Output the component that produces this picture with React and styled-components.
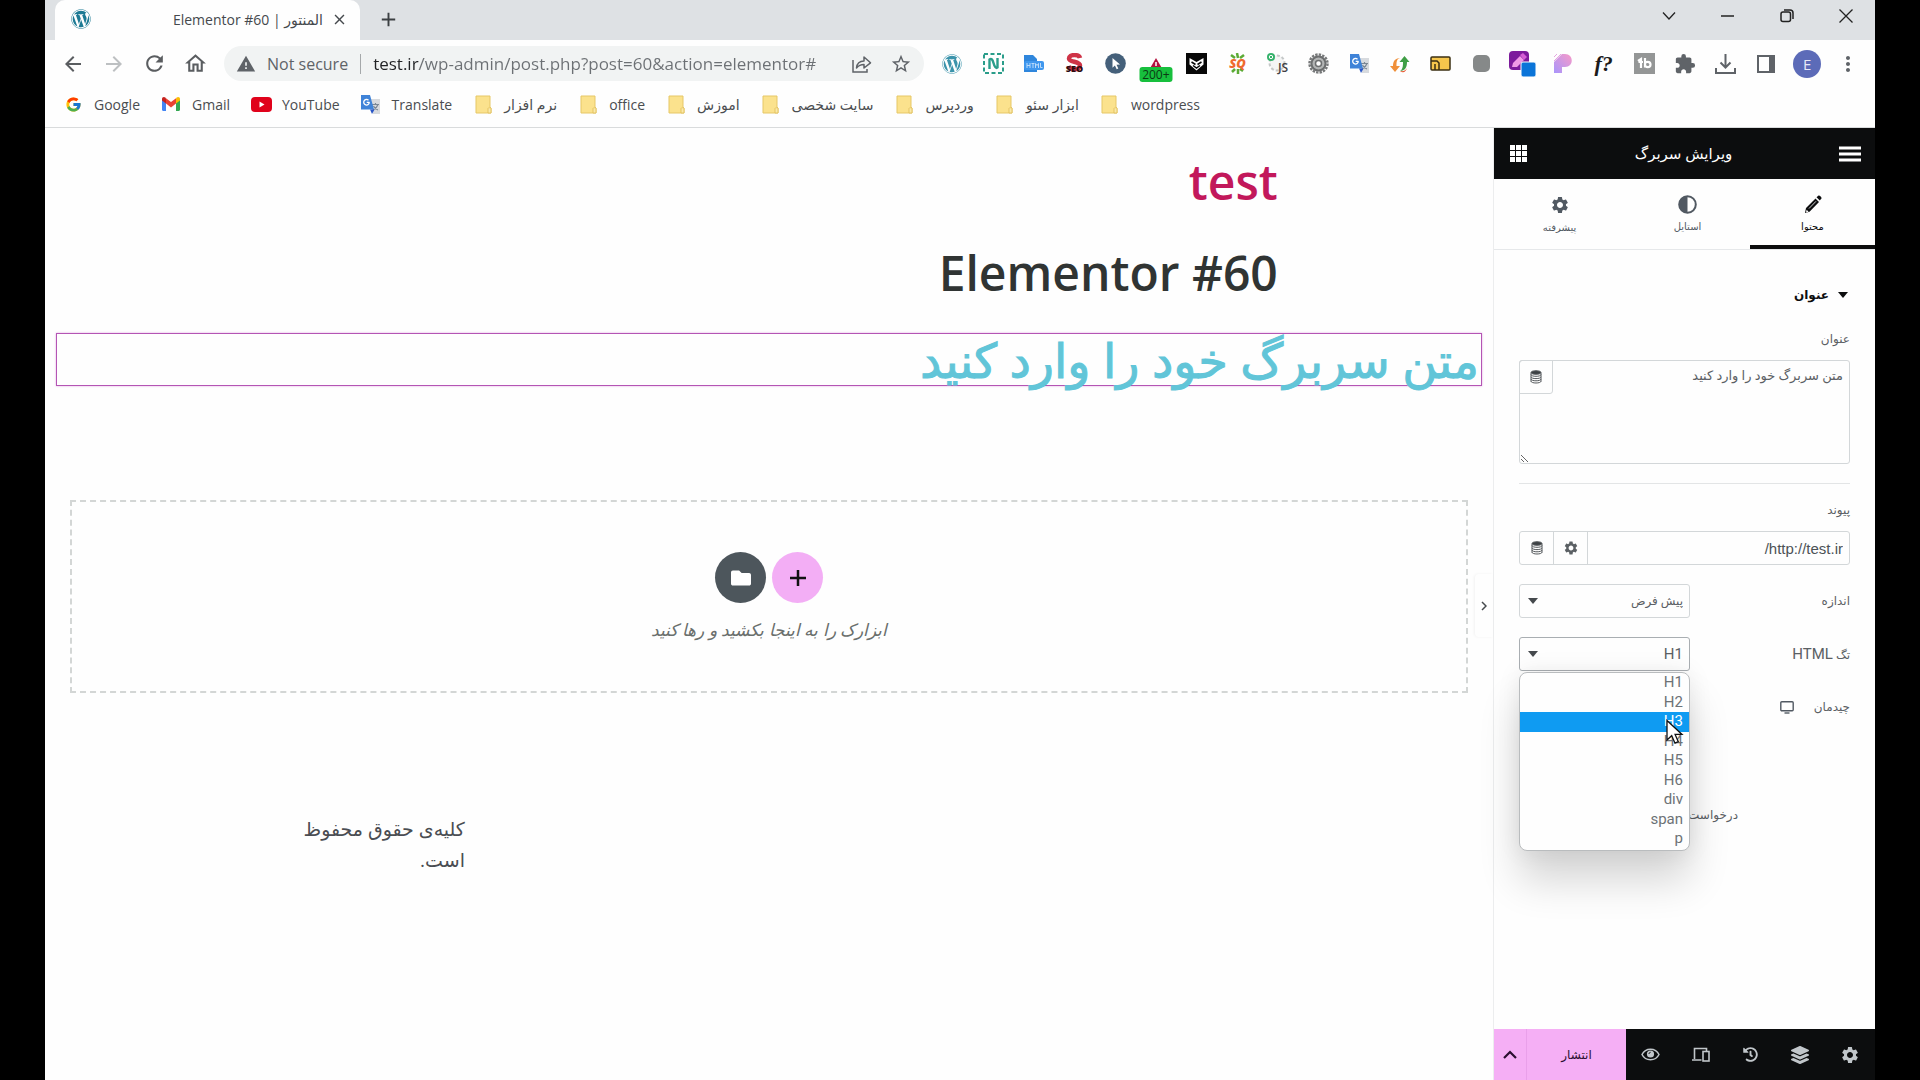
import React from 'react'
import styled, { createGlobalStyle, css } from 'styled-components';
import { FaWordpress, FaHistory, FaLayerGroup, FaFolder } from "react-icons/fa";
import { MdArrowBack, MdArrowForward, MdRefresh, MdOutlineHome, MdWarning, MdStarBorder, MdClose, MdAdd, MdMoreVert, MdSettings, MdExtension } from "react-icons/md";
import { FcGoogle } from "react-icons/fc";

const GlobalStyle = createGlobalStyle`
  * {
    box-sizing: border-box;
  }
  body {
    margin: 0;
    background: #000;
    font-family: 'Open Sans', 'DejaVu Sans', sans-serif;
  }
  button, input, select, textarea {
    font-family: inherit;
    margin: 0;
  }
  button {
    border: 0;
    padding: 0;
    background: none;
    color: inherit;
  }
  h1, h2, p, ul {
    margin: 0;
    padding: 0;
  }
  a {
    color: inherit;
    text-decoration: none;
  }
  svg {
    display: block;
    flex: none;
  }
`;

const Screen = styled.div`
  display: flex;
  flex-direction: column;
  min-height: 100vh;
  margin: 0 45px;
  background: #fefefe;
`;

/* ---------- browser ---------- */

const TabStrip = styled.div`
  display: flex;
  align-items: flex-start;
  height: 40px;
  padding-left: 10px;
  background: #dee1e4;
`;

const Tab = styled.div`
  display: flex;
  align-items: center;
  width: 305px;
  height: 40px;
  padding: 0 12px 2px 16px;
  border-radius: 10px 10px 0 0;
  background: #fefefe;
  color: #45494d;
  font-size: 14px;
  span {
    flex: 1;
    margin-right: 8px;
    text-align: right;
    white-space: nowrap;
  }
`;

const NewTab = styled.button`
  display: flex;
  align-items: center;
  justify-content: center;
  width: 56px;
  height: 38px;
  color: #3c4043;
`;

const WindowControls = styled.div`
  display: flex;
  margin-left: auto;
`;

const WindowButton = styled.button`
  display: flex;
  align-items: center;
  justify-content: center;
  width: 59px;
  height: 32px;
`;

const Toolbar = styled.div`
  display: flex;
  align-items: center;
  height: 47px;
  padding: 0 7px;
`;

const NavButton = styled.button`
  display: flex;
  align-items: center;
  justify-content: center;
  width: 41px;
  height: 35px;
  color: ${({ $dim }) => ($dim ? '#bdc0c2' : '#5a5d60')};
`;

const Address = styled.label`
  display: flex;
  align-items: center;
  width: 700px;
  height: 35px;
  margin: 0 8px;
  padding: 0 12px;
  border-radius: 18px;
  background: #f1f3f3;
  color: #5f6368;
  font-size: 16px;
  .secure {
    margin-left: 11px;
    padding-right: 12px;
    border-right: 1px solid #a5a8aa;
    line-height: 20px;
    white-space: nowrap;
  }
  input {
    flex: 1;
    min-width: 0;
    padding: 0;
    margin-left: 12px;
    border: 0;
    outline: 0;
    font-size: 17px;
    background: linear-gradient(90deg, #202124 46px, #6c7074 46px);
    background-clip: text;
    -webkit-text-fill-color: transparent;
  }
  button + button {
    margin-left: 18px;
  }
`;

const Extensions = styled.div`
  display: flex;
  flex: 1;
  min-width: 0;
`;

const Extension = styled.button`
  position: relative;
  display: flex;
  align-items: center;
  justify-content: center;
  flex: 1;
  min-width: 0;
  height: 35px;
  color: #5f6368;
`;

const Count = styled.span`
  position: absolute;
  left: 50%;
  bottom: -1px;
  transform: translateX(-50%);
  width: 33px;
  border-radius: 3px;
  background: #17bf3d;
  color: #0b3a14;
  font: 12px/15px 'Open Sans', sans-serif;
`;

const Avatar = styled.span`
  width: 28px;
  height: 28px;
  border-radius: 50%;
  background: #5c6bb8;
  color: #e8eaf6;
  font-size: 15px;
  line-height: 28px;
`;

const FontMark = styled.span`
  color: #1b1b1b;
  font: italic 700 22px/28px 'Liberation Serif', serif;
`;

const Bookmarks = styled.nav`
  display: flex;
  align-items: center;
  gap: 21px;
  height: 41px;
  padding: 0 18px 6px;
  border-bottom: 1px solid #d9dbdc;
`;

const Bookmark = styled.a`
  display: flex;
  align-items: center;
  gap: 11px;
  color: #4a4d50;
  font-size: 14px;
  white-space: nowrap;
  .icon {
    display: flex;
    justify-content: center;
    width: 20px;
  }
`;

/* ---------- page canvas ---------- */

const Editor = styled.div`
  display: flex;
  flex: 1;
`;

const Canvas = styled.main`
  position: relative;
  flex: 1;
  min-width: 0;
  direction: rtl;
`;

const Content = styled.div`
  width: calc(70% + 4px);
  margin: 0 auto;
`;

const SiteTitle = styled.h1`
  padding-top: 19px;
  color: #c2185b;
  font-size: 48px;
  font-weight: 600;
  line-height: 70px;
`;

const PageTitle = styled.h2`
  margin: 21px 0 25px;
  color: #303433;
  font-size: 48px;
  font-weight: 600;
  line-height: 70px;
`;

const HeadingWidget = styled.h2`
  height: 53px;
  margin: 0 11px;
  padding-right: 2px;
  border: 1px solid #b455b4;
  box-shadow: 0 0 2px #e3a9e3;
  color: #61c5d8;
  font-size: 48px;
  font-weight: 500;
  line-height: 52px;
  white-space: nowrap;
  -webkit-text-stroke: 1px #61c5d8;
`;

const DropArea = styled.section`
  display: flex;
  flex-direction: column;
  align-items: center;
  height: 193px;
  margin: 114px 25px 0;
  padding-top: 50px;
  border: 2px dashed #d3d6d5;
  color: #6a6f6d;
  font-size: 17px;
  font-style: italic;
  p {
    margin-top: 15px;
    line-height: 24px;
  }
`;

const CircleButtons = styled.div`
  display: flex;
  gap: 6px;
`;

const CircleButton = styled.button`
  display: flex;
  align-items: center;
  justify-content: center;
  width: 51px;
  height: 51px;
  border-radius: 50%;
  background: ${({ $bg }) => $bg};
`;

const Copyright = styled.footer`
  width: 70%;
  margin: 121px auto 0;
  direction: ltr;
  p {
    width: 20%;
    direction: rtl;
    color: #4a4d52;
    font-size: 19px;
    line-height: 31px;
  }
`;

const CollapseButton = styled.button`
  position: absolute;
  top: 446px;
  right: 0;
  display: flex;
  align-items: center;
  justify-content: center;
  width: 18px;
  height: 63px;
  border-radius: 4px 0 0 4px;
  background: #fefefe;
  box-shadow: -1px 0 3px #0000000d;
`;

/* ---------- side panel ---------- */

const Panel = styled.aside`
  display: flex;
  flex-direction: column;
  width: 382px;
  border-left: 1px solid #ecedee;
  direction: rtl;
  font-family: Roboto, 'DejaVu Sans', sans-serif;
  color: #5b6064;
  font-size: 12px;
`;

const PanelHeader = styled.header`
  display: flex;
  align-items: center;
  justify-content: space-between;
  height: 51px;
  padding: 0 14px 0 16px;
  background: #0c0d0e;
  color: #fff;
  font-size: 15px;
`;

const PanelTabs = styled.div`
  display: grid;
  grid-template-columns: 125px 125px 1fr;
  height: 71px;
  border-bottom: 1px solid #e6e8ea;
`;

const PanelTab = styled.button`
  display: flex;
  flex-direction: column;
  align-items: center;
  gap: 5px;
  padding-top: 16px;
  color: #515962;
  font-size: 10px;
  line-height: 16px;
  ${({ $active }) => $active && css`
    border-bottom: 4px solid #0c0d0e;
    color: #0c0d0e;
  `}
`;

const Controls = styled.div`
  flex: 1;
  padding: 33px 25px 0;
`;

const SectionTitle = styled.button`
  display: flex;
  align-items: center;
  gap: 9px;
  height: 24px;
  margin-bottom: 22px;
  padding: 0 2px;
  color: #0c0d0e;
  font-size: 12px;
  font-weight: 700;
`;

const Label = styled.label`
  display: block;
  line-height: 20px;
`;

const Area = styled.div`
  position: relative;
  margin-top: 11px;
  textarea {
    display: block;
    width: 100%;
    height: 104px;
    padding: 5px 6px;
    border: 1px solid #d3d7d9;
    border-radius: 3px;
    outline: 0;
    background: transparent;
    color: #5b6064;
    font-size: 13px;
    line-height: 20px;
    resize: vertical;
  }
`;

const DynamicTag = styled.button`
  position: absolute;
  top: 0;
  left: 0;
  display: flex;
  align-items: center;
  justify-content: center;
  width: 34px;
  height: 34px;
  border: 1px solid #d3d7d9;
  border-radius: 3px 0 3px 0;
`;

const Divider = styled.hr`
  margin: 19px 0 16px;
  border: 0;
  border-top: 1px solid #e3e5e6;
`;

const UrlField = styled.div`
  display: flex;
  height: 34px;
  margin: 11px 0 19px;
  border: 1px solid #d3d7d9;
  border-radius: 3px;
  input {
    flex: 1;
    min-width: 0;
    padding: 0 6px;
    border: 0;
    outline: 0;
    background: none;
    color: #4c5256;
    font-family: 'Liberation Sans', sans-serif;
    font-size: 15px;
  }
  button {
    display: flex;
    align-items: center;
    justify-content: center;
    width: 34px;
    border-right: 1px solid #d3d7d9;
  }
`;

const Row = styled.div`
  display: flex;
  align-items: center;
  justify-content: space-between;
  height: 34px;
  margin-bottom: 19px;
`;

const Field = styled.div`
  position: relative;
  width: 171px;
  svg {
    position: absolute;
    top: 14px;
    left: 9px;
    pointer-events: none;
  }
`;

const Select = styled.select`
  display: block;
  width: 100%;
  height: 34px;
  padding: 0 6px;
  appearance: none;
  border: 1px solid ${({ $open }) => ($open ? '#a9aeb2' : '#d3d7d9')};
  border-radius: 3px;
  outline: 0;
  background: transparent;
  color: #5b6064;
  font-size: ${({ $size }) => $size || 12}px;
`;

const Latin = styled.span`
  font-size: 15px;
`;

const Options = styled.ul`
  position: absolute;
  z-index: 2;
  top: 35px;
  left: 0;
  right: 0;
  overflow: hidden;
  padding-bottom: 1px;
  border: 1px solid #b9bcbe;
  border-radius: 8px;
  background: #fefefe;
  box-shadow: 0 30px 40px #00000029, 0 0 24px #00000014;
  list-style: none;
`;

const Option = styled.li`
  height: ${({ $tall }) => ($tall ? 20 : 19)}px;
  padding-right: 6px;
  color: ${({ $hover }) => ($hover ? '#fff' : '#6d7276')};
  background: ${({ $hover }) => ($hover ? '#0f9bf2' : 'transparent')};
  font-size: 15px;
  line-height: 19px;
`;

const Cursor = styled.svg`
  && {
    position: absolute;
    z-index: 3;
    top: 82px;
    left: 147px;
  }
`;

const Responsive = styled.span`
  display: flex;
  align-items: center;
  gap: 20px;
`;

const Help = styled.a`
  display: block;
  margin-top: 81px;
  padding-right: 112px;
  line-height: 20px;
`;

const PanelFooter = styled.footer`
  display: flex;
  height: 51px;
  background: #0c0d0e;
  color: #c1c6ca;
  button {
    display: flex;
    align-items: center;
    justify-content: center;
    flex: 1;
  }
  .publish {
    flex: none;
    width: 99px;
    background: #f5aff5;
    color: #2b0f30;
    font-size: 12px;
  }
  .more {
    flex: none;
    width: 33px;
    border-right: 1px solid #e9a0ea;
    background: #f5aff5;
    color: #0c0d0e;
  }
`;

/* ---------- drawings ---------- */

const DatabaseIcon = () => (
  <svg width="12" height="14" viewBox="0 0 12 14" fill="none" stroke="#55595c">
    <ellipse cx="6" cy="2.5" rx="5" ry="1.8" fill="#3c4043" />
    <path d="M1 4.5c0 2.4 10 2.4 10 0M1 6.8c0 2.4 10 2.4 10 0M1 9c0 2.4 10 2.4 10 0M1 11.2c0 2.4 10 2.4 10 0M1 3v8.500M11 3v8.500" />
  </svg>
);

const CaretIcon = ({ color = '#45494d' }) => (
  <svg width="10" height="6" viewBox="0 0 10 6"><path d="M0 0h10L5 6z" fill={color} /></svg>
);

const TranslateIcon = () => (
  <svg width="21" height="21" viewBox="0 0 21 21">
    <path d="M9 5h11v15h-7z" fill="#d7dade" />
    <path d="M12 10.500h7M15.500 9v1.500M18 10.500c-1 3-3 4.500-5 5.500M13.500 12c1 2 3 3.500 4.500 4" stroke="#7b8794" strokeWidth="1.200" fill="none" />
    <path d="M1 1h9l4 14.500H1z" fill="#3f83d8" />
    <path d="M10 15.500h4.500L12 20z" fill="#2a56c6" />
    <path d="M9.500 8.300H6.700M9.300 8.300a2.800 2.800 0 1 1-.8-2" stroke="#fff" strokeWidth="1.300" fill="none" />
  </svg>
);

const GmailIcon = () => (
  <svg width="18" height="14" viewBox="0 0 18 14">
    <path d="M0 2v10.800c0 .7.5 1.200 1.200 1.200H4V6z" fill="#4285f4" />
    <path d="M18 2v10.800c0 .7-.5 1.200-1.200 1.200H14V6z" fill="#34a853" />
    <path d="M4 1.200l5 3.900 5-3.900V6.500l-5 3.900-5-3.900z" fill="#ea4335" />
    <path d="M0 2C0 .2 2-.5 3.300.6L4 1.200v5.300L0 3.500z" fill="#c5221f" />
    <path d="M18 2c0-1.800-2-2.500-3.300-1.400L14 1.200v5.300l4-3z" fill="#fbbc04" />
  </svg>
);

const YoutubeIcon = () => (
  <svg width="21" height="15" viewBox="0 0 21 15">
    <rect width="21" height="15" rx="4" fill="#e0021b" />
    <path d="M8.500 4.500l5 3-5 3z" fill="#fff" />
  </svg>
);

const FolderIcon = () => (
  <svg width="17" height="19" viewBox="0 0 17 19">
    <path d="M1 1h14v11l1 1v5H1z" fill="#fbe28d" stroke="#e6c766" />
    <path d="M13 17v-3.500c0-1 3-1 3 0V18h-3z" fill="#fbe9a8" stroke="#e0bd55" strokeWidth=".8" />
  </svg>
);

const ShareIcon = () => (
  <svg width="20" height="18" viewBox="0 0 20 18" fill="none" stroke="#5f6368" strokeWidth="1.500">
    <path d="M1 5v12h14v-3" />
    <path d="M4.500 13c.5-4.500 3.500-7 7.500-7V2l6.500 5.800L12 13V9.500c-3 0-5.500 1-7.500 3.500z" strokeLinejoin="round" />
  </svg>
);

const RestoreIcon = () => (
  <svg width="14" height="14" viewBox="0 0 14 14" fill="none" stroke="#222" strokeWidth="1.500">
    <rect x="1" y="3" width="9.500" height="9.500" rx="2" />
    <path d="M4 1h6a3 3 0 0 1 3 3v6" />
  </svg>
);

const HtmlIcon = () => (
  <svg width="21" height="19" viewBox="0 0 21 19">
    <path d="M1 1h9l4 4v13H1z" fill="#2f86dc" />
    <rect x="1" y="7" width="20" height="9" rx="2" fill="#3f97ee" />
    <path d="M4 9v5M7 9v5M4 11.500h3M8.500 9.500h3M10 9.500V14M12.500 14V9.500l1.500 2 1.500-2V14M17.500 9v4.500h2" stroke="#b9dafb" fill="none" />
  </svg>
);

const WarningCount = () => (
  <svg width="14" height="12" viewBox="0 0 14 12">
    <path d="M7 0l7 12H0z" fill="#b3123f" />
    <path d="M7 4v4M7 9v1.500" stroke="#fff" strokeWidth="1.500" />
  </svg>
);

const NimbusIcon = () => (
  <svg width="21" height="21" viewBox="0 0 21 21" fill="none" stroke="#2a9d8a">
    <rect x="1" y="1" width="19" height="19" strokeWidth="2" strokeDasharray="4 2.500" />
    <path d="M6.500 16V6.500c2-1.500 3 0 4 3.500s2.500 6 4 4.500V5" strokeWidth="2.400" />
  </svg>
);

const SeoIcon = () => (
  <svg width="21" height="21" viewBox="0 0 21 21">
    <path d="M16 5c-1-4-11-4-11 .5 0 4 11 2.500 11 7 0 5-10 5-11.500.5" fill="none" stroke="#cf3347" strokeWidth="4.500" />
    <text x="10.500" y="19" textAnchor="middle" fontSize="9" fontWeight="800" fill="#2b0b10">SEO</text>
  </svg>
);

const CursorIcon = () => (
  <svg width="21" height="21" viewBox="0 0 21 21">
    <circle cx="10.500" cy="10.500" r="10.300" fill="#45607a" />
    <path d="M7.500 5l7.500 6.500-3.500.3 1.800 3.700-1.600.8-1.800-3.800-2.400 2.200z" fill="#fff" />
  </svg>
);

const OwlIcon = () => (
  <svg width="21" height="21" viewBox="0 0 21 21">
    <path d="M0 0h21v21H0z" fill="#070707" />
    <path d="M3.500 5l7 4 7-4v6.500l-7 6-7-6z" fill="#fff" />
    <path d="M5.500 9l4 2.500M15.500 9l-4 2.500M7 12.500l3.500 2.500 3.500-2.500" stroke="#070707" strokeWidth="1.500" fill="none" />
  </svg>
);

const SqIcon = () => (
  <svg width="21" height="21" viewBox="0 0 21 21">
    <path d="M4 2l4 3M10 0l1 5M17 2l-4 3M5 19l3-3M11 21v-5M16 18l-3-2" stroke="#5cab35" strokeWidth="2.500" />
    <text x="10.500" y="15" textAnchor="middle" fontSize="13" fontWeight="800" fontStyle="italic" fill="#ef6a2e">SQ</text>
  </svg>
);

const JsIcon = () => (
  <svg width="22" height="22" viewBox="0 0 22 22">
    <circle cx="10" cy="10" r="7.500" fill="#f4f5f5" stroke="#c5c8c8" strokeWidth="2" strokeDasharray="3 2" />
    <circle cx="4" cy="4" r="4" fill="#35b26b" />
    <circle cx="4" cy="4" r="1.700" fill="none" stroke="#fff" />
    <text x="16" y="19" textAnchor="middle" fontSize="12" fontWeight="600" fill="#3f4143">JS</text>
  </svg>
);

const GearIcon = () => (
  <svg width="21" height="21" viewBox="0 0 21 21" fill="none">
    <circle cx="10.500" cy="10.500" r="9" stroke="#77797a" strokeWidth="2.500" strokeDasharray="2.400 1.130" />
    <circle cx="10.500" cy="10.500" r="7" fill="#b3b5b5" stroke="#6c6e6f" strokeWidth="2" />
    <circle cx="10.500" cy="10.500" r="3" fill="#fefefe" stroke="#6c6e6f" strokeWidth="1.500" />
  </svg>
);

const ArrowsIcon = () => (
  <svg width="20" height="20" viewBox="0 0 20 20">
    <path d="M10 17c2.500-1.500 3-4 3-9h-3.500L14.500 2l5 6H17c0 6-2 8.500-7 9z" fill="#3f9e45" />
    <path d="M10 17c4 .5 6-.5 7-3-1 4-4 5.500-7 3z" fill="#e8572f" />
    <path d="M10 4C6.500 5 6.500 8 6.500 12H10l-5 6-5-6h3c0-5 2-7.500 7-8z" fill="#f0903a" />
  </svg>
);

const YellowFolder = () => (
  <svg width="21" height="15" viewBox="0 0 21 15">
    <rect x="1" y="1" width="19" height="13" rx="1" fill="#f6c64c" stroke="#3b2f12" strokeWidth="1.500" />
    <path d="M1 5h6l2 2v7M5 14V8" stroke="#3b2f12" strokeWidth="1.500" fill="none" />
  </svg>
);

const PickerIcon = () => (
  <svg width="29" height="29" viewBox="0 0 29 29">
    <rect x="1" y="2" width="20" height="19" rx="4" fill="#7d1b9c" />
    <path d="M4 18l1-4 7-7 4 4-7 7z" fill="#f09ae6" />
    <path d="M12 6l3-2 4 4-3 3z" fill="#d65fd6" />
    <rect x="13" y="13" width="15" height="15" rx="2" fill="#0b74d8" stroke="#fefefe" />
  </svg>
);

const PIcon = () => (
  <svg width="18" height="19" viewBox="0 0 18 19">
    <defs>
      <linearGradient id="pix" x1="1" y1="0" x2="0" y2="1">
        <stop offset="0" stopColor="#f79ac8" />
        <stop offset="1" stopColor="#a995fb" />
      </linearGradient>
    </defs>
    <path d="M0 19V8L8 0h3c9 0 9 13 0 13H8v6z" fill="url(#pix)" />
    <path d="M0 3l3-3M0 7l7-7" stroke="#e5a6e0" />
  </svg>
);

const BrandIcon = () => (
  <svg width="21" height="21" viewBox="0 0 21 21">
    <path d="M0 0h21v21H0z" fill="#949696" />
    <path d="M4 8l3-2v9M4.500 9H9M11 5v9.500M11 11c0-3 5.500-3 5.500.5S11 15 11 11.500" stroke="#fff" strokeWidth="2.200" fill="none" />
  </svg>
);

const DownloadIcon = () => (
  <svg width="21" height="20" viewBox="0 0 21 20" fill="none" stroke="#5f6368" strokeWidth="2">
    <path d="M10.500 0v13M5.500 8.500l5 5 5-5M1 14v5h19v-5" />
  </svg>
);

const SidePanelIcon = () => (
  <svg width="18" height="18" viewBox="0 0 18 18">
    <rect x="1" y="1" width="16" height="16" fill="none" stroke="#5f6368" strokeWidth="2" />
    <path d="M12 1h5v16h-5z" fill="#5f6368" />
  </svg>
);

const WidgetsIcon = () => (
  <svg width="18" height="18" viewBox="0 0 18 18" fill="#fff">
    {[0, 6, 12].map((y) => [0, 6, 12].map((x) => <rect key={`${x}-${y}`} x={x} y={y} width="5" height="5" />))}
  </svg>
);

const MenuIcon = () => (
  <svg width="22" height="16" viewBox="0 0 22 16"><path d="M0 2h22M0 8h22M0 14h22" stroke="#fff" strokeWidth="3" /></svg>
);

const AdjustIcon = () => (
  <svg width="19" height="19" viewBox="0 0 19 19">
    <circle cx="9.500" cy="9.500" r="8.300" fill="none" stroke="#515962" strokeWidth="2" />
    <path d="M9.500 1a8.500 8.500 0 0 0 0 17z" fill="#515962" />
  </svg>
);

const PencilIcon = () => (
  <svg width="18" height="19" viewBox="0 0 18 19" fill="#0c0d0e">
    <path d="M12.500 3.500l3.300 3.300M1 18l1-5L11.500 3.500 15 7 5.500 16.800z" />
    <path d="M12.500 2.300L14 1c.8-.7 1.500-.5 2.200.1l.8.800c.7.700.7 1.500 0 2.200L15.800 5.500z" />
    <path d="M2 17.500l.6-2.800 2 2z" fill="#fefefe" />
    <path d="M5 13.500l7-7.200" stroke="#fefefe" strokeWidth=".8" />
  </svg>
);

const EyeIcon = () => (
  <svg width="19" height="13" viewBox="0 0 19 13" fill="none" stroke="#c1c6ca" strokeWidth="1.500">
    <path d="M1 6.500C4.500-.5 14.500-.5 18 6.500 14.500 13.500 4.500 13.500 1 6.500z" />
    <circle cx="9.500" cy="6" r="3.600" fill="#c1c6ca" stroke="none" />
    <path d="M8 6c0-1 .6-1.700 1.600-1.700" stroke="#0c0d0e" strokeWidth="1" />
  </svg>
);

const DevicesIcon = () => (
  <svg width="18" height="15" viewBox="0 0 18 15" fill="none" stroke="#c1c6ca" strokeWidth="1.600">
    <path d="M2.500 12V1.500h12V4M0 13h9.500" />
    <rect x="11" y="4.500" width="6" height="9.500" />
  </svg>
);

const DesktopIcon = () => (
  <svg width="14" height="13" viewBox="0 0 14 13" fill="none" stroke="#515962" strokeWidth="1.400">
    <rect x=".8" y=".8" width="12.400" height="9" rx="1" />
    <path d="M4.500 12h5" />
  </svg>
);

const Pointer = () => (
  <Cursor width="18" height="26" viewBox="0 0 18 26">
    <path d="M1 1.500v19.500l4.700-4.300 3.300 7.500 3.300-1.500-3.200-7.300H16z" fill="#fff" stroke="#111" strokeWidth="1.300" />
  </Cursor>
);

const extensions = [
  ['wordpress', <FaWordpress size={20} color="#3b93ab" />],
  ['capture', <NimbusIcon />],
  ['html', <HtmlIcon />],
  ['seo', <SeoIcon />],
  ['cursor', <CursorIcon />],
  ['alerts', <><WarningCount /><Count>200+</Count></>],
  ['owl', <OwlIcon />],
  ['sq', <SqIcon />],
  ['js', <JsIcon />],
  ['gear', <GearIcon />],
  ['translate', <TranslateIcon />],
  ['arrows', <ArrowsIcon />],
  ['folder', <YellowFolder />],
  ['blank', <svg width="17" height="17"><rect width="17" height="17" rx="5" fill="#868989" /></svg>],
  ['picker', <PickerIcon />],
  ['pixel', <PIcon />],
  ['font', <FontMark>f?</FontMark>],
  ['tb', <BrandIcon />],
  ['extensions', <MdExtension size={22} />],
  ['downloads', <DownloadIcon />],
  ['side panel', <SidePanelIcon />],
  ['profile', <Avatar>E</Avatar>],
  ['menu', <MdMoreVert size={24} />],
];

const bookmarks = [
  ['Google', <FcGoogle size={17} />],
  ['Gmail', <GmailIcon />],
  ['YouTube', <YoutubeIcon />],
  ['Translate', <TranslateIcon />],
  ['نرم افزار'],
  ['office'],
  ['اموزش'],
  ['سایت شخصی'],
  ['وردپرس'],
  ['ابزار سئو'],
  ['wordpress'],
];

const tags = ['H1', 'H2', 'H3', 'H4', 'H5', 'H6', 'div', 'span', 'p'];

const Browser = () => {
  return (
    <header>
      <TabStrip>
        <Tab>
          <FaWordpress size={20} color="#1d7a94" />
          <span>Elementor #60 | المنتور</span>
          <button aria-label="Close tab"><MdClose size={17} /></button>
        </Tab>
        <NewTab aria-label="New tab"><MdAdd size={23} /></NewTab>
        <WindowControls>
          <WindowButton aria-label="Search tabs">
            <svg width="14" height="8" viewBox="0 0 14 8"><path d="M1 .5l6 6.500 6-6.500" fill="none" stroke="#222" strokeWidth="1.300" /></svg>
          </WindowButton>
          <WindowButton aria-label="Minimize">
            <svg width="13" height="2" viewBox="0 0 13 2"><path d="M0 1h13" stroke="#222" strokeWidth="1.500" /></svg>
          </WindowButton>
          <WindowButton aria-label="Restore"><RestoreIcon /></WindowButton>
          <WindowButton aria-label="Close">
            <svg width="14" height="14" viewBox="0 0 14 14"><path d="M.5.5l13 13M13.500.5l-13 13" stroke="#222" strokeWidth="1.300" /></svg>
          </WindowButton>
        </WindowControls>
      </TabStrip>

      <Toolbar>
        <NavButton aria-label="Back"><MdArrowBack size={24} /></NavButton>
        <NavButton aria-label="Forward" $dim><MdArrowForward size={24} /></NavButton>
        <NavButton aria-label="Reload"><MdRefresh size={25} /></NavButton>
        <NavButton aria-label="Home"><MdOutlineHome size={25} /></NavButton>
        <Address>
          <MdWarning size={20} />
          <span className="secure">Not secure</span>
          <input type="text" aria-label="Address" defaultValue="test.ir/wp-admin/post.php?post=60&action=elementor#" />
          <button aria-label="Share"><ShareIcon /></button>
          <button aria-label="Bookmark this page"><MdStarBorder size={22} /></button>
        </Address>
        <Extensions>
          {extensions.map(([name, icon]) => (
            <Extension key={name} aria-label={name}>{icon}</Extension>
          ))}
        </Extensions>
      </Toolbar>

      <Bookmarks>
        {bookmarks.map(([name, icon]) => (
          <Bookmark href="#" key={name}>
            <span className="icon">{icon || <FolderIcon />}</span>
            {name}
          </Bookmark>
        ))}
      </Bookmarks>
    </header>
  )
}

const PageCanvas = () => {
  return (
    <Canvas>
      <Content>
        <SiteTitle>test</SiteTitle>
        <PageTitle>Elementor #60</PageTitle>
      </Content>
      <HeadingWidget>متن سربرگ خود را وارد کنید</HeadingWidget>
      <DropArea>
        <CircleButtons>
          <CircleButton $bg="#f3aef5" aria-label="Add section">
            <svg width="16" height="16" viewBox="0 0 16 16"><path d="M8 0v16M0 8h16" stroke="#111" strokeWidth="2.500" /></svg>
          </CircleButton>
          <CircleButton $bg="#4d565c" aria-label="Add template"><FaFolder size={20} color="#fff" /></CircleButton>
        </CircleButtons>
        <p>ابزارک را به اینجا بکشید و رها کنید</p>
      </DropArea>
      <Copyright>
        <p>کلیه‌ی حقوق محفوظ است.</p>
      </Copyright>
      <CollapseButton aria-label="Collapse panel">
        <svg width="6" height="10" viewBox="0 0 6 10"><path d="M1 1l4 4-4 4" fill="none" stroke="#45494d" strokeWidth="1.500" /></svg>
      </CollapseButton>
    </Canvas>
  )
}

const SidePanel = () => {
  return (
    <Panel>
      <PanelHeader>
        <button aria-label="Menu"><MenuIcon /></button>
        <span>ویرایش سربرگ</span>
        <button aria-label="Widgets"><WidgetsIcon /></button>
      </PanelHeader>
      <PanelTabs>
        <PanelTab $active><PencilIcon />محتوا</PanelTab>
        <PanelTab><AdjustIcon />استایل</PanelTab>
        <PanelTab><MdSettings size={20} />پیشرفته</PanelTab>
      </PanelTabs>

      <Controls>
        <SectionTitle><CaretIcon color="#0c0d0e" />عنوان</SectionTitle>
        <Label htmlFor="title">عنوان</Label>
        <Area>
          <textarea id="title" defaultValue="متن سربرگ خود را وارد کنید" />
          <DynamicTag aria-label="Dynamic tags"><DatabaseIcon /></DynamicTag>
        </Area>
        <Divider />
        <Label htmlFor="link">پیوند</Label>
        <UrlField>
          <input id="link" type="text" defaultValue="http://test.ir/" />
          <button aria-label="Link options"><MdSettings size={16} /></button>
          <button aria-label="Dynamic tags"><DatabaseIcon /></button>
        </UrlField>
        <Row>
          <Label htmlFor="size">اندازه</Label>
          <Field>
            <Select id="size" defaultValue="default">
              <option value="default">پیش فرض</option>
            </Select>
            <CaretIcon />
          </Field>
        </Row>
        <Row>
          <Label htmlFor="tag">تگ <Latin>HTML</Latin></Label>
          <Field>
            <Select id="tag" defaultValue="H1" $open $size={15}>
              {tags.map((tag) => <option key={tag}>{tag}</option>)}
            </Select>
            <CaretIcon />
            <Options role="listbox" aria-label="HTML">
              {tags.map((tag, i) => (
                <Option key={tag} role="option" aria-selected={tag === 'H3'} $hover={tag === 'H3'} $tall={i % 2 === 0}>{tag}</Option>
              ))}
            </Options>
            <Pointer />
          </Field>
        </Row>
        <Row>
          <Responsive>چیدمان <DesktopIcon /></Responsive>
        </Row>
        <Help href="#">درخواست</Help>
      </Controls>

      <PanelFooter>
        <button aria-label="Settings"><MdSettings size={20} /></button>
        <button aria-label="Navigator"><FaLayerGroup size={18} /></button>
        <button aria-label="History"><FaHistory size={15} /></button>
        <button aria-label="Responsive mode"><DevicesIcon /></button>
        <button aria-label="Preview"><EyeIcon /></button>
        <button className="publish">انتشار</button>
        <button className="more" aria-label="Save options">
          <svg width="14" height="9" viewBox="0 0 14 9"><path d="M1 8l6-6 6 6" fill="none" stroke="#2b0f30" strokeWidth="2.200" /></svg>
        </button>
      </PanelFooter>
    </Panel>
  )
}

const App = () => {
  return (
    <>
      <GlobalStyle />
      <Screen>
        <Browser />
        <Editor>
          <PageCanvas />
          <SidePanel />
        </Editor>
      </Screen>
    </>
  )
}

export default App
